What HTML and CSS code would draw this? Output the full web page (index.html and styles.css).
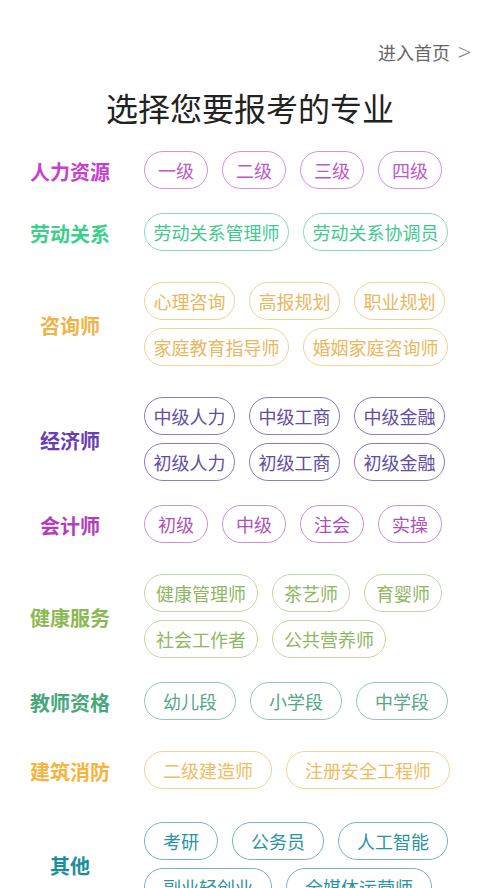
FILE: index.html
```html
<!DOCTYPE html>
<html lang="zh-CN">
<head>
    <meta charset="UTF-8">
    <meta name="viewport" content="width=device-width, initial-scale=1.0">
    <title>选择专业</title>
    <link rel="stylesheet" href="styles.css">
</head>
<body>
    <div class="page">
        <div class="topbar">
            <a class="skip" href="#">进入首页<span class="chevron">&gt;</span></a>
        </div>
        <h1 class="title">选择您要报考的专业</h1>

        <div class="groups">
            <div class="group hr">
                <div class="label">人力资源</div>
                <div class="tags">
                    <span class="tag">一级</span>
                    <span class="tag">二级</span>
                    <span class="tag">三级</span>
                    <span class="tag">四级</span>
                </div>
            </div>

            <div class="group labor tight">
                <div class="label">劳动关系</div>
                <div class="tags">
                    <span class="tag">劳动关系管理师</span>
                    <span class="tag">劳动关系协调员</span>
                </div>
            </div>

            <div class="group consult">
                <div class="label">咨询师</div>
                <div class="tags">
                    <span class="tag">心理咨询</span>
                    <span class="tag">高报规划</span>
                    <span class="tag">职业规划</span>
                    <span class="tag">家庭教育指导师</span>
                    <span class="tag">婚姻家庭咨询师</span>
                </div>
            </div>

            <div class="group econ">
                <div class="label">经济师</div>
                <div class="tags">
                    <span class="tag">中级人力</span>
                    <span class="tag">中级工商</span>
                    <span class="tag">中级金融</span>
                    <span class="tag">初级人力</span>
                    <span class="tag">初级工商</span>
                    <span class="tag">初级金融</span>
                </div>
            </div>

            <div class="group account tight">
                <div class="label">会计师</div>
                <div class="tags">
                    <span class="tag">初级</span>
                    <span class="tag">中级</span>
                    <span class="tag">注会</span>
                    <span class="tag">实操</span>
                </div>
            </div>

            <div class="group health">
                <div class="label">健康服务</div>
                <div class="tags">
                    <span class="tag">健康管理师</span>
                    <span class="tag">茶艺师</span>
                    <span class="tag">育婴师</span>
                    <span class="tag">社会工作者</span>
                    <span class="tag">公共营养师</span>
                </div>
            </div>

            <div class="group teacher tight roomy">
                <div class="label">教师资格</div>
                <div class="tags">
                    <span class="tag">幼儿段</span>
                    <span class="tag">小学段</span>
                    <span class="tag">中学段</span>
                </div>
            </div>

            <div class="group build roomy">
                <div class="label">建筑消防</div>
                <div class="tags">
                    <span class="tag">二级建造师</span>
                    <span class="tag">注册安全工程师</span>
                </div>
            </div>

            <div class="group other roomy last">
                <div class="label">其他</div>
                <div class="tags">
                    <span class="tag">考研</span>
                    <span class="tag">公务员</span>
                    <span class="tag">人工智能</span>
                    <span class="tag">副业轻创业</span>
                    <span class="tag">全媒体运营师</span>
                </div>
            </div>
        </div>
    </div>
</body>
</html>
```

FILE: styles.css
```css
body {
    margin: 0;
    background-color: #fff;
    font-family: "Noto Sans CJK SC", "Noto Sans", sans-serif;
}

.page {
    width: 500px;
    height: 888px;
    overflow: hidden;
}

.topbar {
    display: flex;
    justify-content: flex-end;
    padding: 39px 28px 0 0;
}

.skip {
    display: flex;
    align-items: center;
    height: 26px;
    font-size: 18px;
    line-height: 26px;
    color: #666;
    text-decoration: none;
}

.chevron {
    display: block;
    margin-left: 7px;
    font-family: "DejaVu Sans", sans-serif;
    font-weight: 200;
    line-height: 26px;
    transform: scaleY(1.2);
    color: #777;
}

.title {
    margin: 20px 0 0;
    font-size: 32px;
    line-height: 44px;
    font-weight: 400;
    color: #222;
    text-align: center;
}

.groups {
    margin-top: 22px;
}

.group {
    display: flex;
    align-items: center;
    padding-left: 20px;
    --label: #333;
    --text: #333;
    --border: #ccc;
}

.group + .group {
    margin-top: 31px;
}

.group.tight {
    margin-top: 24px;
}

.group.last {
    margin-top: 33px;
}

.label {
    width: 100px;
    margin-right: 24px;
    padding-top: 4px;
    font-size: 20px;
    line-height: 28px;
    font-weight: 700;
    text-align: center;
    color: var(--label);
}

.tags {
    display: flex;
    flex-wrap: wrap;
    gap: 8px 14px;
    width: 310px;
}

.tag {
    display: inline-flex;
    justify-content: center;
    box-sizing: border-box;
    height: 38px;
    min-width: 64px;
    padding: 0 8.5px;
    border: 1px solid var(--border);
    border-radius: 19px;
    font-size: 18px;
    line-height: 36px;
    color: var(--text);
    white-space: nowrap;
}

.health .tag {
    padding: 0 11px;
}

.roomy .tag {
    padding: 0 18px;
}

.hr      { --label: #c640cf; --text: #c057cb; --border: #d68fdb; }
.labor   { --label: #3ccf8c; --text: #3fc98f; --border: #86dcb6; }
.consult { --label: #f0b446; --text: #e9b75e; --border: #f1d396; }
.econ    { --label: #6a3db6; --text: #624ca4; --border: #8f7bc2; }
.account { --label: #b43dbd; --text: #b04fb8; --border: #cc93d0; }
.health  { --label: #8bba52; --text: #8fb662; --border: #bfd9a3; }
.teacher { --label: #47a77d; --text: #54a787; --border: #93c9b2; }
.build   { --label: #f5b43c; --text: #efbc62; --border: #f4d393; }
.other   { --label: #1b8e9d; --text: #2a93a0; --border: #72b8c1; }
```
